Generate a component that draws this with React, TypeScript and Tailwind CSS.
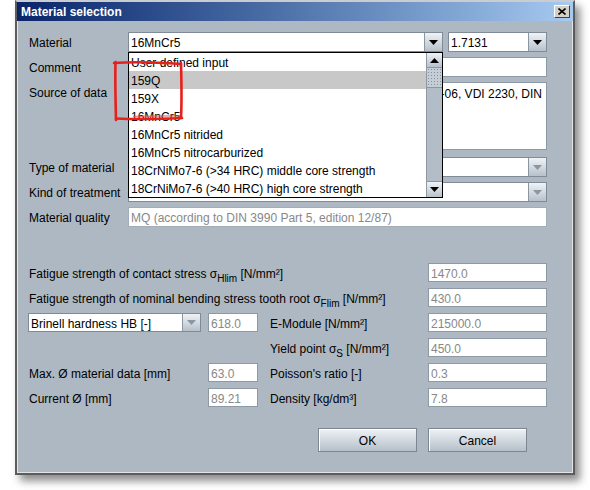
import React from "react";

function Tri({ disabled = false, up = false }: { disabled?: boolean; up?: boolean }) {
  return (
    <svg width="9" height="5" viewBox="0 0 9 5">
      <path d={up ? "M0 5 L4.5 0 L9 5Z" : "M0 0 L9 0 L4.5 5Z"} fill={disabled ? "#8a96a2" : "#000"} />
    </svg>
  );
}

function ArrowBtn({ disabled = false }: { disabled?: boolean }) {
  return (
    <div className="w-[18px] h-full shrink-0 flex items-center justify-center border-l border-[#8a96a2] bg-gradient-to-b from-[#f0f3f6] to-[#b7c1cb]">
      <Tri disabled={disabled} />
    </div>
  );
}

function Combo({ text, className, disabled = false }: { text: string; className: string; disabled?: boolean }) {
  return (
    <div className={`flex border border-[#7f8b97] bg-white ${className}`}>
      <div className="flex-1 flex items-center pl-[2px] pt-[2px] text-[12px] leading-none text-black whitespace-nowrap overflow-hidden">{text}</div>
      <ArrowBtn disabled={disabled} />
    </div>
  );
}

function Field({ value, className }: { value: string; className: string }) {
  return (
    <div className={`border border-[#8d99a5] bg-white flex items-center pl-[2px] pt-[2px] text-[12px] leading-none text-[#888] whitespace-nowrap overflow-hidden ${className}`}>
      {value}
    </div>
  );
}

function Sub({ children }: { children: React.ReactNode }) {
  return <sub className="text-[10px] bottom-[-4px]">{children}</sub>;
}

const items = [
  "User defined input",
  "159Q",
  "159X",
  "16MnCr5",
  "16MnCr5 nitrided",
  "16MnCr5 nitrocarburized",
  "18CrNiMo7-6 (>34 HRC) middle core strength",
  "18CrNiMo7-6 (>40 HRC) high core strength",
];

export default function App() {
  return (
    <div className="relative w-[590px] h-[490px] bg-white overflow-hidden pl-[15px] font-['Liberation_Sans',Arial,sans-serif] text-black">
      <div className="w-[560px] h-[475px] flex flex-col border-2 border-[#5c5c5c] border-t-[#c9cdd2] shadow-[5px_6px_8px_rgba(0,0,0,0.45)]">
        {/* title bar */}
        <div className="h-[19px] shrink-0 flex items-center justify-between pl-[4px] pr-[3px] bg-gradient-to-r from-[#0a246a] to-[#a6caf0]">
          <span className="text-white font-bold text-[12px] leading-none">Material selection</span>
          <div className="w-[16px] h-[13px] bg-[#d4d0c8] border border-t-white border-l-white border-r-[#404040] border-b-[#404040] flex items-center justify-center">
            <svg width="8" height="7" viewBox="0 0 8 7">
              <path d="M0.5 0.5L7.5 6.5M7.5 0.5L0.5 6.5" stroke="#000" strokeWidth="1.6" />
            </svg>
          </div>
        </div>

        {/* body */}
        <div className="relative flex-1 flex flex-col bg-[#aeb8c2] border-x border-b border-[#e2e5e8] pl-[10px] pr-[25px] pt-[11px] text-[12px] leading-[14px]">
          {/* top section */}
          <div className="flex flex-col gap-[5px]">
            <div className="flex h-[20px] items-center">
              <div className="w-[100px] pl-[1px] pt-[2px]">Material</div>
              <Combo text="16MnCr5" className="w-[315px] h-[20px]" />
              <div className="w-[5px]" />
              <Combo text="1.7131" className="w-[99px] h-[20px]" />
            </div>
            <div className="flex h-[20px] items-center">
              <div className="w-[100px] pl-[1px] pt-[2px]">Comment</div>
              <Field value="" className="flex-1 h-[20px]" />
            </div>
            <div className="flex h-[68px] items-start">
              <div className="w-[100px] pl-[1px] pt-[4px]">Source of data</div>
              <div className="flex-1 h-[68px] border border-[#8d99a5] bg-white pt-[4px] pr-[4px]">
                <div className="flex justify-end overflow-hidden whitespace-nowrap text-[12px] leading-[14px]">
                  Niemann/Winter, FKM guideline 2003-06, VDI 2230, DIN
                </div>
              </div>
            </div>
            <div className="flex h-[20px] items-center mt-[2px]">
              <div className="w-[100px] pl-[1px] pt-[2px]">Type of material</div>
              <Combo text="" className="flex-1 h-[20px]" disabled />
            </div>
            <div className="flex h-[20px] items-center">
              <div className="w-[100px] pl-[1px] pt-[2px] whitespace-nowrap">Kind of treatment</div>
              <Combo text="" className="flex-1 h-[20px]" disabled />
            </div>
            <div className="flex h-[20px] items-center">
              <div className="w-[100px] pl-[1px] pt-[2px]">Material quality</div>
              <Field value="MQ (according to DIN 3990 Part 5, edition 12/87)" className="flex-1 h-[20px] border-[#a3adb7]" />
            </div>
          </div>

          {/* bottom section */}
          <div className="flex flex-col gap-[6px] mt-[36px]">
            <div className="flex h-[19px] items-center">
              <div className="flex-1 pl-[1px] pt-[2px]">
                Fatigue strength of contact stress σ<Sub>Hlim</Sub> [N/mm²]
              </div>
              <Field value="1470.0" className="w-[119px] h-[19px]" />
            </div>
            <div className="flex h-[19px] items-center">
              <div className="flex-1 pl-[1px] pt-[2px]">
                Fatigue strength of nominal bending stress tooth root σ<Sub>Flim</Sub> [N/mm²]
              </div>
              <Field value="430.0" className="w-[119px] h-[19px]" />
            </div>
            <div className="flex h-[19px] items-center">
              <div className="w-[180px]">
                <Combo text="Brinell hardness HB [-]" className="w-[173px] h-[19px]" disabled />
              </div>
              <Field value="618.0" className="w-[50px] h-[19px]" />
              <div className="w-[12px]" />
              <div className="w-[158px] pt-[2px]">E-Module [N/mm²]</div>
              <Field value="215000.0" className="w-[119px] h-[19px]" />
            </div>
            <div className="flex h-[19px] items-center">
              <div className="w-[242px]" />
              <div className="w-[158px] pt-[2px]">
                Yield point σ<Sub>S</Sub> [N/mm²]
              </div>
              <Field value="450.0" className="w-[119px] h-[19px]" />
            </div>
            <div className="flex h-[19px] items-center">
              <div className="w-[180px] pl-[1px] pt-[2px]">Max. Ø material data [mm]</div>
              <Field value="63.0" className="w-[50px] h-[19px]" />
              <div className="w-[12px]" />
              <div className="w-[158px] pt-[2px]">Poisson's ratio [-]</div>
              <Field value="0.3" className="w-[119px] h-[19px]" />
            </div>
            <div className="flex h-[19px] items-center">
              <div className="w-[180px] pl-[1px] pt-[2px]">Current Ø [mm]</div>
              <Field value="89.21" className="w-[50px] h-[19px]" />
              <div className="w-[12px]" />
              <div className="w-[158px] pt-[2px]">Density [kg/dm³]</div>
              <Field value="7.8" className="w-[119px] h-[19px]" />
            </div>
          </div>

          {/* buttons */}
          <div className="flex justify-end gap-[11px] pr-[20px] mt-[21px]">
            <button className="w-[99px] h-[24px] pt-[1px] border border-[#7c8792] bg-gradient-to-b from-[#eef2f5] to-[#b6c0ca] text-[12px] shadow-[inset_1px_1px_0_#ffffff]">OK</button>
            <button className="w-[99px] h-[24px] pt-[1px] border border-[#7c8792] bg-gradient-to-b from-[#eef2f5] to-[#b6c0ca] text-[12px] shadow-[inset_1px_1px_0_#ffffff]">Cancel</button>
          </div>

          {/* dropdown popup */}
          <div className="absolute left-[110px] top-[31px] w-[315px] h-[146px] border border-black bg-white flex">
            <div className="flex-1 flex flex-col">
              {items.map((t, i) => (
                <div
                  key={t}
                  className={`h-[18px] shrink-0 flex items-center pl-[2px] pt-[2px] text-[12px] whitespace-nowrap ${i === 1 ? "bg-[#c8c8c8]" : ""}`}
                >
                  {t}
                </div>
              ))}
            </div>
            <div className="w-[16px] h-full flex flex-col bg-[#b3bdc7] border-l border-[#8e99a4]">
              <div className="h-[15px] shrink-0 flex items-center justify-center border-b border-[#8a96a2] bg-gradient-to-b from-[#f0f3f6] to-[#b7c1cb]">
                <Tri up />
              </div>
              <div className="h-[20px] shrink-0 border-b border-[#8a96a2] bg-[#c5ced6] bg-[radial-gradient(circle,#86919c_0.8px,transparent_1px)] bg-[length:3px_3px]" />
              <div className="flex-1" />
              <div className="h-[16px] shrink-0 flex items-center justify-center border-t border-[#8a96a2] bg-gradient-to-b from-[#f0f3f6] to-[#b7c1cb]">
                <Tri />
              </div>
            </div>
          </div>
        </div>
      </div>

      {/* red annotation */}
      <svg className="absolute left-0 top-0 pointer-events-none" width="590" height="490" viewBox="0 0 590 490">
        <g fill="none" stroke="#e8201a" strokeLinecap="round" strokeWidth="2.6">
          <path d="M114 63 C 135 61.5, 160 62.5, 181 64" />
          <path d="M181 63 C 181.5 82, 182 100, 181 118" />
          <path d="M182 118 C 160 119, 138 119.5, 116 118.5" />
          <path d="M116 120 C 115.5 100, 115 80, 115.5 62" />
        </g>
        <path d="M133 116.5 C 150 115.8, 166 116.2, 180 115.8" fill="none" stroke="#ef5a55" strokeWidth="1.3" opacity="0.7" />
      </svg>
    </div>
  );
}
